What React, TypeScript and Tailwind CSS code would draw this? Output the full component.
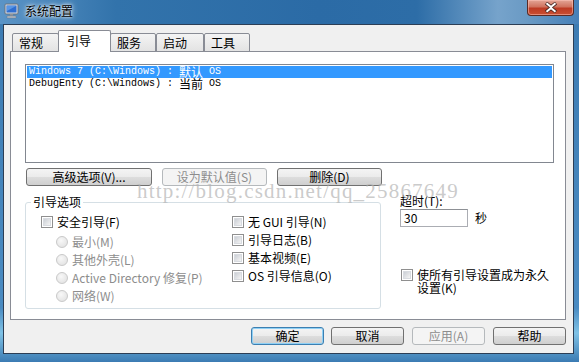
import React from "react";

const ui = "font-['Noto_Sans_CJK_SC',sans-serif]";

function Btn({
  children,
  w,
  disabled,
  primary,
  className = "",
}: {
  children: React.ReactNode;
  w: string;
  disabled?: boolean;
  primary?: boolean;
  className?: string;
}) {
  const border = primary
    ? "border-[#3c7fb1] shadow-[inset_0_0_0_1px_#8fd0f5]"
    : disabled
    ? "border-[#b5b9bc]"
    : "border-[#707070]";
  const bg = disabled
    ? "bg-[#f4f4f4]"
    : "bg-[linear-gradient(#f4f4f4_0%,#ebebeb_50%,#dddddd_51%,#cfcfcf_100%)]";
  return (
    <div
      className={`${w} h-[18px] shrink-0 rounded-[3px] border ${border} ${bg} flex items-center justify-center text-[12px] leading-[14px] ${
        disabled ? "text-[#8d8d8d]" : "text-black"
      } ${className}`}
    >
      {children}
    </div>
  );
}

function Check({ label, disabled }: { label: React.ReactNode; disabled?: boolean }) {
  return (
    <div className="flex items-center h-[18px]">
      <div className="w-[12px] h-[12px] border border-[#8f8f8f] bg-white p-[1px] shrink-0">
        <div className="w-full h-full bg-[linear-gradient(135deg,#cbcfd5,#f4f4f4)] border border-[#d8dbe0]" />
      </div>
      <span className={`ml-[4px] text-[12px] leading-[14px] whitespace-nowrap ${disabled ? "text-[#8d8d8d]" : "text-black"}`}>
        {label}
      </span>
    </div>
  );
}

function Radio({ label }: { label: React.ReactNode }) {
  return (
    <div className="flex items-center h-[18px] ml-[15px]">
      <div className="w-[12px] h-[12px] rounded-full border border-[#c9c9c9] bg-[radial-gradient(circle_at_40%_35%,#f8f8f8,#dedede)] shrink-0" />
      <span className="ml-[4px] text-[12px] leading-[14px] text-[#8d8d8d] whitespace-nowrap">{label}</span>
    </div>
  );
}

function Tab({ label, w, active }: { label: string; w: string; active?: boolean }) {
  return active ? (
    <div
      className={`${w} h-[22px] bg-white border border-b-0 border-[#898c95] rounded-t-[2px] -mx-[1px] z-10 flex items-start pt-[3px] pl-[8px] text-[12px] leading-[14px]`}
    >
      {label}
    </div>
  ) : (
    <div
      className={`${w} h-[19px] bg-[linear-gradient(#f4f4f4,#e3e3e3)] border border-[#898c95] rounded-t-[2px] flex items-start pt-[2px] pl-[6px] text-[12px] leading-[14px]`}
    >
      {label}
    </div>
  );
}

export default function App() {
  return (
    <div
      className={`${ui} relative w-[579px] h-[362px] flex flex-col overflow-hidden bg-[linear-gradient(#3c7bb2,#4a8bc2_85%,#7fc2e6_92%,#3b7bb3)] text-black`}
    >
      {/* title bar */}
      <div className="h-[24px] flex items-start shrink-0 bg-[linear-gradient(90deg,#5b94c6_0%,#3273ab_20%,#2b6ba6_55%,#2d6da7_72%,#76a3cb_86%,#6a9ac4_91%,#4680b8_100%)]">
        <svg width="16" height="16" viewBox="0 0 16 16" className="ml-[4px] mt-[3px]">
          <rect x="1" y="1" width="13" height="10" rx="1" fill="#d9dde3" stroke="#6b7480" />
          <rect x="2.5" y="2.5" width="10" height="7" fill="#2f6ed0" />
          <path d="M3 3 L12 3 L3 8 Z" fill="#6aa6ee" opacity="0.7" />
          <rect x="6" y="11" width="3" height="2" fill="#8a939d" />
          <rect x="3" y="13" width="9" height="2" rx="0.5" fill="#b8bfc7" stroke="#6b7480" strokeWidth="0.5" />
        </svg>
        <span className="ml-[5px] mt-[4px] text-[12px] leading-[14px] text-black [text-shadow:0_0_6px_#ffffff,0_0_3px_#ffffff]">
          系统配置
        </span>
        <div className="flex-1" />
        <div className="mr-[5px] w-[47px] h-[16px] rounded-b-[4px] border border-t-0 border-[#5a2a24] bg-[linear-gradient(#e3a596_0%,#d0735f_45%,#bd3b24_55%,#c94f33_100%)] flex items-center justify-center shadow-[inset_0_0_0_1px_rgba(255,200,190,0.5)]">
          <svg width="14" height="11" viewBox="0 0 14 11">
            <path d="M2 1 L7 5 L12 1 M2 10 L7 6 L12 10" stroke="#4a2a26" strokeWidth="3.6" fill="none" />
            <path d="M2.5 1.3 L7 5 L11.5 1.3 M2.5 9.7 L7 6 L11.5 9.7" stroke="#ffffff" strokeWidth="2" fill="none" />
          </svg>
        </div>
      </div>

      {/* client */}
      <div className="flex-1 flex pl-[3px] pr-[5px] pb-[8px]">
        <div className="flex-1 bg-[#f0f0f0] border border-[#2c3e55] flex flex-col pl-[6px] pt-[6px]">
          {/* tabs */}
          <div className="flex items-end ml-[2px] -mb-[1px] relative z-10 h-[21px]">
            <Tab label="常规" w="w-[47px]" />
            <Tab label="引导" w="w-[53px]" active />
            <Tab label="服务" w="w-[46px]" />
            <Tab label="启动" w="w-[48px]" />
            <Tab label="工具" w="w-[46px]" />
          </div>

          {/* panel */}
          <div className="w-[556px] h-[269px] bg-white border border-[#898c95] flex flex-col pl-[14px] pt-[12px]">
            {/* listbox */}
            <div className="w-[529px] h-[99px] border border-[#828790] bg-white p-[1px] font-['Liberation_Mono','Noto_Sans_CJK_SC',monospace] text-[10px]">
              <div className="h-[12px] bg-[#3399ff] text-white flex items-center pl-[2px] leading-[12px] whitespace-pre">
                Windows 7 (C:\Windows) : <span className="text-[12px] font-['Noto_Sans_CJK_SC'] leading-[12px]">默认</span> OS
              </div>
              <div className="h-[12px] flex items-center pl-[2px] leading-[12px] whitespace-pre">
                DebugEnty (C:\Windows) : <span className="text-[12px] font-['Noto_Sans_CJK_SC'] leading-[12px]">当前</span> OS
              </div>
            </div>

            {/* button row */}
            <div className="flex mt-[5px] ml-[1px] gap-[10px]">
              <Btn w="w-[126px]">高级选项(V)...</Btn>
              <Btn w="w-[105px]" disabled>
                设为默认值(S)
              </Btn>
              <Btn w="w-[105px]">删除(D)</Btn>
            </div>

            {/* lower section */}
            <div className="flex mt-[9px]">
              <fieldset className="w-[356px] h-[114px] border border-[#d5dfe5] rounded-[3px] pl-[5px] pr-0 pb-0 m-0">
                <legend className="px-[2px] text-[12px] leading-[14px]">引导选项</legend>
                <div className="grid grid-cols-[191px_1fr] ml-[10px] pt-[4px]">
                  <div className="flex flex-col">
                    <Check label="安全引导(F)" />
                    <div className="mt-[2px]">
                      <Radio label="最小(M)" />
                    </div>
                    <Radio label="其他外壳(L)" />
                    <Radio label="Active Directory 修复(P)" />
                    <Radio label="网络(W)" />
                  </div>
                  <div className="flex flex-col">
                    <Check label="无 GUI 引导(N)" />
                    <Check label="引导日志(B)" />
                    <Check label="基本视频(E)" />
                    <Check label="OS 引导信息(O)" />
                  </div>
                </div>
              </fieldset>

              <div className="ml-[19px] flex flex-col">
                <div className="text-[12px] leading-[14px] -mt-[1px]">超时(T):</div>
                <div className="flex items-center mt-[1px]">
                  <div className="w-[68px] h-[18px] border border-[#abadb3] border-t-[#8d9095] bg-white text-[12px] leading-[14px] pl-[3px] flex items-center">
                    30
                  </div>
                  <span className="ml-[7px] text-[12px] leading-[14px]">秒</span>
                </div>
                <div className="flex items-start mt-[41px] ml-[1px]">
                  <div className="w-[12px] h-[12px] border border-[#8f8f8f] bg-white p-[1px] shrink-0 mt-[1px]">
                    <div className="w-full h-full bg-[linear-gradient(135deg,#cbcfd5,#f4f4f4)] border border-[#d8dbe0]" />
                  </div>
                  <span className="ml-[4px] w-[140px] text-[12px] leading-[13px]">使所有引导设置成为永久设置(K)</span>
                </div>
              </div>
            </div>
          </div>

          {/* bottom buttons */}
          <div className="flex mt-[7px] ml-[241px]">
            <Btn w="w-[73px]" primary>
              确定
            </Btn>
            <Btn w="w-[73px]" className="ml-[7px]">
              取消
            </Btn>
            <Btn w="w-[73px]" className="ml-[8px]" disabled>
              应用(A)
            </Btn>
            <Btn w="w-[73px]" className="ml-[8px]">
              帮助
            </Btn>
          </div>
        </div>
      </div>

      {/* watermark */}
      <div className="absolute left-[137px] top-[180px] font-['Liberation_Serif',serif] text-[21px] leading-[22px] tracking-[1.2px] text-[#b4b4b4]/70 pointer-events-none whitespace-nowrap">
        http://blog.csdn.net/qq_25867649
      </div>
    </div>
  );
}
